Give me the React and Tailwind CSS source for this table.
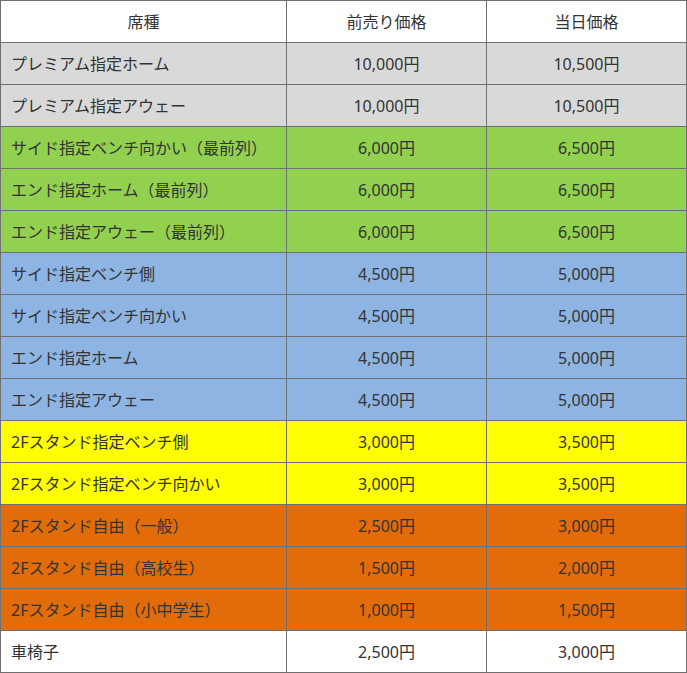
const rows = [
  { name: 'プレミアム指定ホーム', pre: '10,000円', day: '10,500円', bg: 'bg-[#d9d9d9]' },
  { name: 'プレミアム指定アウェー', pre: '10,000円', day: '10,500円', bg: 'bg-[#d9d9d9]' },
  { name: 'サイド指定ベンチ向かい（最前列）', pre: '6,000円', day: '6,500円', bg: 'bg-[#92d050]' },
  { name: 'エンド指定ホーム（最前列）', pre: '6,000円', day: '6,500円', bg: 'bg-[#92d050]' },
  { name: 'エンド指定アウェー（最前列）', pre: '6,000円', day: '6,500円', bg: 'bg-[#92d050]' },
  { name: 'サイド指定ベンチ側', pre: '4,500円', day: '5,000円', bg: 'bg-[#8db4e2]' },
  { name: 'サイド指定ベンチ向かい', pre: '4,500円', day: '5,000円', bg: 'bg-[#8db4e2]' },
  { name: 'エンド指定ホーム', pre: '4,500円', day: '5,000円', bg: 'bg-[#8db4e2]' },
  { name: 'エンド指定アウェー', pre: '4,500円', day: '5,000円', bg: 'bg-[#8db4e2]' },
  { name: '2Fスタンド指定ベンチ側', pre: '3,000円', day: '3,500円', bg: 'bg-[#ffff00]' },
  { name: '2Fスタンド指定ベンチ向かい', pre: '3,000円', day: '3,500円', bg: 'bg-[#ffff00]' },
  { name: '2Fスタンド自由（一般）', pre: '2,500円', day: '3,000円', bg: 'bg-[#e26b0a]' },
  { name: '2Fスタンド自由（高校生）', pre: '1,500円', day: '2,000円', bg: 'bg-[#e26b0a]' },
  { name: '2Fスタンド自由（小中学生）', pre: '1,000円', day: '1,500円', bg: 'bg-[#e26b0a]' },
  { name: '車椅子', pre: '2,500円', day: '3,000円', bg: 'bg-white' },
];

const cell = 'h-[42px] flex items-center border-r border-b border-[#707070]';

export default function App() {
  return (
    <div
      className="w-[687px] bg-white text-[16px] text-[#333333] border-l border-t border-[#707070]"
      style={{ fontFamily: '"Noto Sans", "Noto Sans CJK JP", sans-serif' }}
    >
      <div className="flex bg-white">
        <div className={`${cell} w-[286px] justify-center`}>席種</div>
        <div className={`${cell} w-[200px] justify-center`}>前売り価格</div>
        <div className={`${cell} w-[200px] justify-center`}>当日価格</div>
      </div>
      {rows.map((r) => (
        <div key={r.name} className={`flex ${r.bg}`}>
          <div className={`${cell} w-[286px] pl-[10px]`}>{r.name}</div>
          <div className={`${cell} w-[200px] justify-center`}>{r.pre}</div>
          <div className={`${cell} w-[200px] justify-center`}>{r.day}</div>
        </div>
      ))}
    </div>
  );
}
